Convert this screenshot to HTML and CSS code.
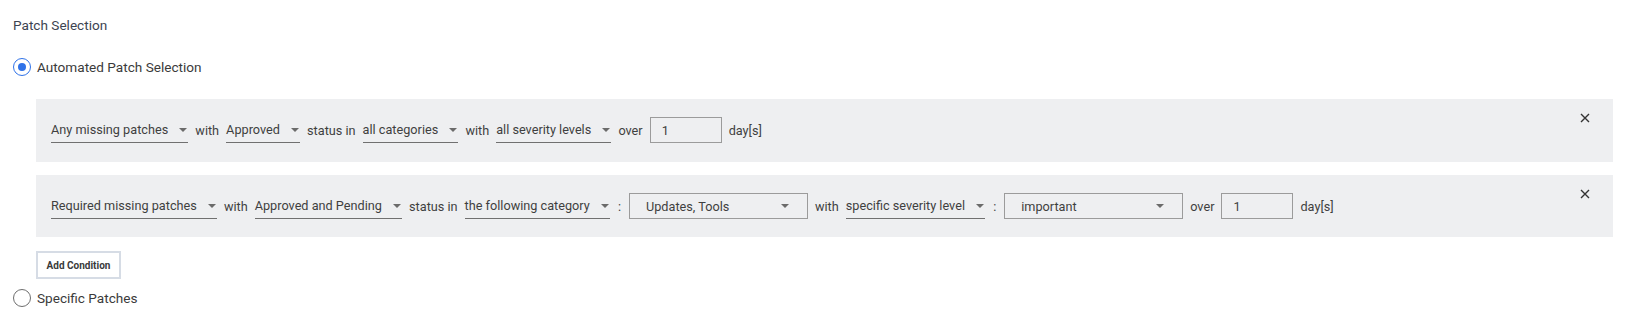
FILE: index.html
```html
<!DOCTYPE html>
<html>

<head>
  <title>Patch Selection</title>
  <link rel="stylesheet" href="styles.css">
</head>

<body>

  <div class="page">
    <h2 class="title">Patch Selection</h2>

    <label class="radio-row">
      <span class="radio checked"></span>
      <span>Automated Patch Selection</span>
    </label>

    <div class="conditions">
      <div class="condition">
        <div class="cond-row">
          <span class="dd">Any missing patches <svg class="caret" width="8" height="4" viewBox="0 0 8 4"><path d="M0 0h8L4 4z"/></svg></span>
          <span class="word">with</span>
          <span class="dd">Approved <svg class="caret" width="8" height="4" viewBox="0 0 8 4"><path d="M0 0h8L4 4z"/></svg></span>
          <span class="word">status in</span>
          <span class="dd">all categories <svg class="caret" width="8" height="4" viewBox="0 0 8 4"><path d="M0 0h8L4 4z"/></svg></span>
          <span class="word">with</span>
          <span class="dd">all severity levels <svg class="caret" width="8" height="4" viewBox="0 0 8 4"><path d="M0 0h8L4 4z"/></svg></span>
          <span class="word">over</span>
          <span class="num">1</span>
          <span class="word">day[s]</span>
        </div>
        <button class="close" title="Remove">
          <svg width="10" height="10" viewBox="0 0 10 10"><path d="M1 1l8 8M9 1L1 9"/></svg>
        </button>
      </div>

      <div class="condition">
        <div class="cond-row">
          <span class="dd">Required missing patches <svg class="caret" width="8" height="4" viewBox="0 0 8 4"><path d="M0 0h8L4 4z"/></svg></span>
          <span class="word">with</span>
          <span class="dd">Approved and Pending <svg class="caret" width="8" height="4" viewBox="0 0 8 4"><path d="M0 0h8L4 4z"/></svg></span>
          <span class="word">status in</span>
          <span class="dd">the following category <svg class="caret" width="8" height="4" viewBox="0 0 8 4"><path d="M0 0h8L4 4z"/></svg></span>
          <span class="word sep">:</span>
          <span class="box">Updates, Tools <svg class="caret" width="8" height="4" viewBox="0 0 8 4"><path d="M0 0h8L4 4z"/></svg></span>
          <span class="word">with</span>
          <span class="dd">specific severity level <svg class="caret" width="8" height="4" viewBox="0 0 8 4"><path d="M0 0h8L4 4z"/></svg></span>
          <span class="word sep">:</span>
          <span class="box">important <svg class="caret" width="8" height="4" viewBox="0 0 8 4"><path d="M0 0h8L4 4z"/></svg></span>
          <span class="word">over</span>
          <span class="num">1</span>
          <span class="word">day[s]</span>
        </div>
        <button class="close" title="Remove">
          <svg width="10" height="10" viewBox="0 0 10 10"><path d="M1 1l8 8M9 1L1 9"/></svg>
        </button>
      </div>

      <button class="add-btn">Add Condition</button>
    </div>

    <label class="radio-row last">
      <span class="radio"></span>
      <span>Specific Patches</span>
    </label>
  </div>

</body>

</html>
```

FILE: styles.css
```css
body {
  margin: 0;
  background: #fff;
  font-family: Roboto, "Liberation Sans", Arial, sans-serif;
  font-size: 12.7px;
  color: #3f3f3f;
}

.page {
  display: flex;
  flex-direction: column;
  padding: 15px 13px 0 13px;
}

.title {
  margin: 0;
  font-size: 13.6px;
  font-weight: normal;
  line-height: 20px;
  color: #3d4451;
}

.radio-row {
  display: flex;
  align-items: center;
  gap: 6px;
  height: 20px;
  margin-top: 22px;
  font-size: 13.6px;
  color: #3b3b3b;
}

.radio-row.last {
  margin-top: 9px;
}

.radio {
  box-sizing: border-box;
  width: 18px;
  height: 18px;
  border: 1px solid #6e6e6e;
  border-radius: 50%;
  background: #fff;
  display: flex;
  align-items: center;
  justify-content: center;
}

.radio.checked {
  border: 1.5px solid #2f72e8;
}

.radio.checked::after {
  content: "";
  width: 8px;
  height: 8px;
  border-radius: 50%;
  background: #2f72e8;
}

.conditions {
  display: flex;
  flex-direction: column;
  align-items: flex-start;
  margin: 22px 0 0 23px;
}

.condition {
  position: relative;
  box-sizing: border-box;
  width: 1577px;
  height: 63px;
  margin-bottom: 13px;
  padding: 18px 15px;
  background: #eeeff1;
}

.condition + .condition {
  height: 62px;
}

.cond-row {
  display: flex;
  align-items: center;
  gap: 7px;
  height: 26px;
}

.word {
  white-space: nowrap;
}

.sep {
  margin: 0 1px;
}

.dd {
  box-sizing: border-box;
  display: inline-flex;
  align-items: center;
  height: 26px;
  padding-right: 1px;
  border-bottom: 1px solid #707070;
  white-space: pre;
}

.caret {
  margin-left: 8px;
  fill: #6b6b6b;
}

.box {
  box-sizing: border-box;
  display: inline-flex;
  align-items: center;
  justify-content: space-between;
  width: 179px;
  height: 26px;
  padding: 0 18px 0 16px;
  border: 1px solid #9b9b9b;
}

.num {
  box-sizing: border-box;
  display: inline-flex;
  align-items: center;
  width: 72px;
  height: 26px;
  padding-left: 11px;
  border: 1px solid #9b9b9b;
}

.close {
  position: absolute;
  top: 14px;
  right: 23px;
  padding: 0;
  border: none;
  background: none;
  cursor: pointer;
}

.close svg {
  display: block;
  stroke: #333;
  stroke-width: 1.4;
}

.add-btn {
  box-sizing: border-box;
  width: 85px;
  height: 28px;
  margin-top: 1px;
  padding: 0;
  border: 2px solid #d6dce5;
  background: #fff;
  font-family: Roboto, "Liberation Sans", Arial, sans-serif;
  font-size: 10px;
  font-weight: bold;
  color: #3a3a3a;
  cursor: pointer;
}
```
